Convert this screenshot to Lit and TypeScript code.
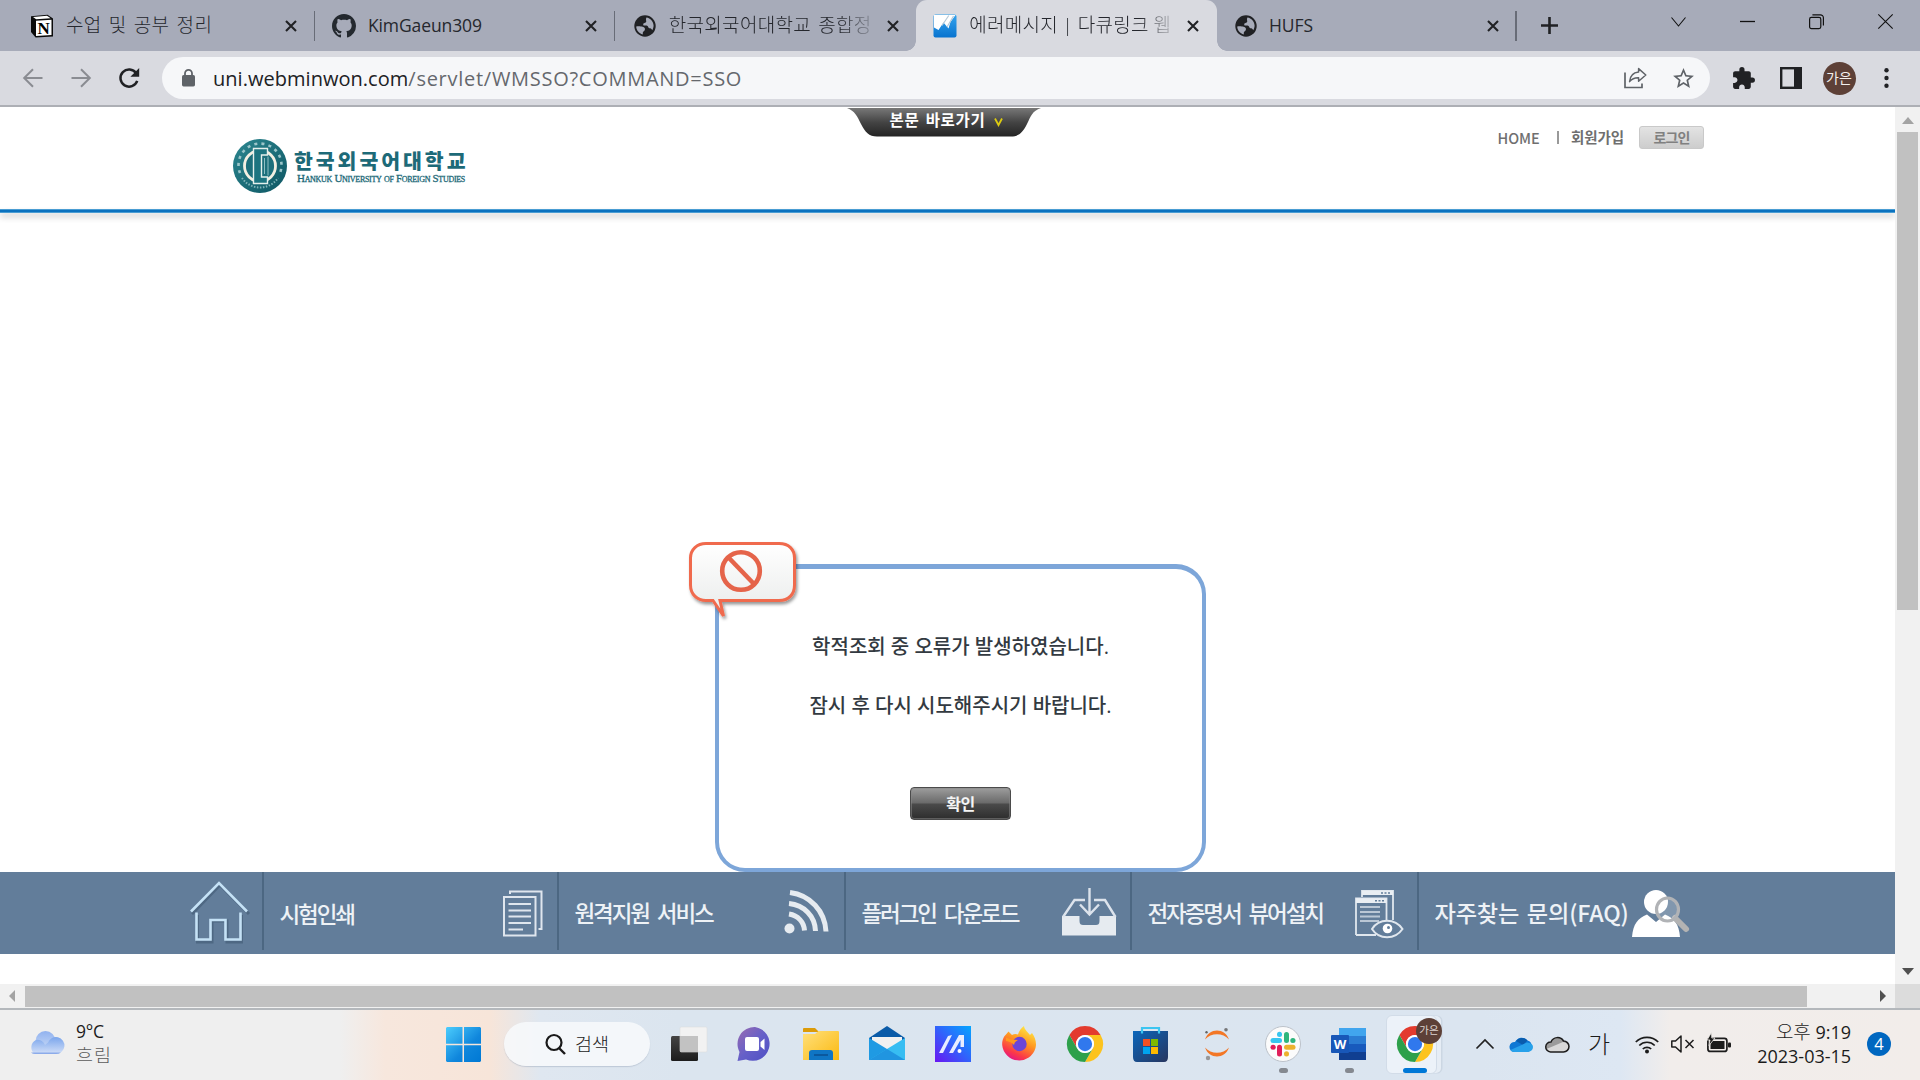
import { LitElement, html, css, svg, TemplateResult } from "lit";
import { customElement } from "lit/decorators.js";

const icon = (w: number, h: number, body: TemplateResult) =>
  html`<svg width=${w} height=${h} viewBox="0 0 ${w} ${h}" fill="none">${body}</svg>`;

const reset = css`
  * { box-sizing: border-box; }
  svg { display: block; flex: none; overflow: visible; }
  :host {
    font-family: "Open Sans", "Noto Sans CJK KR", sans-serif;
    white-space: nowrap;
  }
`;

/* ---------- browser icons ---------- */
const closeIcon = icon(12, 12, svg`<path d="M1 1L11 11M11 1L1 11" stroke="#202124" stroke-width="2.1"/>`);
const notion = icon(24, 24, svg`
  <path d="M1 2.2L17.5 .8L23 4.6V22.4L5.6 23.6L1 18Z" fill="#0b0b0b"/>
  <path d="M3 3L17 1.8L20.6 4.2L6.2 5.2Z" fill="#fff"/>
  <path d="M6 6.8L21.5 5.8V21L6 22Z" fill="#fff"/>
  <text x="13.7" y="20" text-anchor="middle" font-family="Liberation Serif" font-weight="700" font-size="17" fill="#000">N</text>`);
const github = html`<svg width="24" height="24" viewBox="0 0 16 16"><path fill="#24292f" d="M8 0C3.58 0 0 3.58 0 8c0 3.54 2.29 6.53 5.47 7.59.4.07.55-.17.55-.38 0-.19-.01-.82-.01-1.49-2.01.37-2.53-.49-2.69-.94-.09-.23-.48-.94-.82-1.13-.28-.15-.68-.52-.01-.53.63-.01 1.08.58 1.23.82.72 1.21 1.87.87 2.33.66.07-.52.28-.87.51-1.07-1.78-.2-3.64-.89-3.64-3.95 0-.87.31-1.59.82-2.15-.08-.2-.36-1.02.08-2.12 0 0 .67-.21 2.2.82.64-.18 1.32-.27 2-.27s1.36.09 2 .27c1.53-1.04 2.2-.82 2.2-.82.44 1.1.16 1.92.08 2.12.51.56.82 1.27.82 2.15 0 3.07-1.87 3.75-3.65 3.95.29.25.54.73.54 1.48 0 1.07-.01 1.93-.01 2.2 0 .21.15.46.55.38A8.01 8.01 0 0 0 16 8c0-4.42-3.58-8-8-8z"/></svg>`;
const globe = icon(24, 24, svg`
  <circle cx="12" cy="12" r="10.7" fill="#202124"/>
  <path d="M3.2 12.6C5 12 8 12.3 9.6 12.8C11.6 13.5 12.4 14.6 11.8 16C11 17.6 9.8 17.4 9.8 19V20.4C6 19.6 3.4 16.4 3.2 12.6Z" fill="#a7abb9"/>
  <path d="M13.4 3.4C17.4 4 20.5 7.4 20.6 11.6C20.6 13.4 20 15 19.2 16.2C18.6 14.4 17.4 14.2 16.2 14.2C15.2 14.2 15.4 11.8 13.6 11.6C12.2 11.4 10.2 12 10.2 10.4C10.2 8.8 12.8 9.4 13.2 7.8C13.5 6.6 12.4 5.6 13.4 3.4Z" fill="#a7abb9"/>`);
const chart = icon(24, 24, svg`
  <defs><linearGradient id="cg" x1="0" y1="0" x2="0" y2="1"><stop offset="0" stop-color="#35a4ee"/><stop offset="1" stop-color="#0873cf"/></linearGradient></defs>
  <rect x=".5" y=".5" width="23" height="23" rx="2" fill="url(#cg)"/>
  <path d="M1 1H22.5L17.5 8L15.5 14.5L10.5 8.5L5.5 16L1 13.5Z" fill="#fff"/>
  <path d="M15.8 1.5L9 11.5M20.5 2L14 13" stroke="#b6c9d8" stroke-width="1.2"/>`);

interface Tab { cls: string; icon: TemplateResult; title: string; }
const tabs: Tab[] = [
  { cls: "first", icon: notion, title: "수업 및 공부 정리" },
  { cls: "latin", icon: github, title: "KimGaeun309" },
  { cls: "nosep fade", icon: globe, title: "한국외국어대학교 종합정" },
  { cls: "active fade", icon: chart, title: "에러메시지 | 다큐링크 웹" },
  { cls: "latin", icon: globe, title: "HUFS" },
];

@customElement("browser-chrome")
export class BrowserChrome extends LitElement {
  static styles = [reset, css`
    :host { display: block; height: 107px; background: #d9dae0; border-bottom: 2px solid #adafb5; }
    .strip { display: flex; height: 51px; background: #a7abb9; padding-left: 15px; }
    .tab { position: relative; display: flex; align-items: center; width: 300.4px; height: 51px; padding-left: 17px; flex: none; }
    .tab::after { content: ""; width: 1.5px; height: 30px; margin-left: 16.5px; background: #686c77; flex: none; }
    .tab.nosep::after, .tab.active::after { visibility: hidden; }
    .title { width: 204.5px; flex: none; margin: 0 19px 0 12px; font-size: 19px; line-height: 50px; height: 51px; color: #25272d; letter-spacing: .35px; word-spacing: 2px; font-weight: 300; }
    .first { padding-left: 14.5px; }
    .first .title { width: 200px; letter-spacing: .300px; margin-left: 12.500px; }
    .latin .title { font-size: 17.5px; letter-spacing: -.1px; line-height: 51px; font-weight: 400; margin-left: 11.500px; width: 198.500px; }
    .nosep .title { margin-right: 11.500px; width: 206.500px; letter-spacing: .300px; }
    .active .title { margin-right: 13px; }
    .fade .title { -webkit-mask-image: linear-gradient(90deg, #000 83%, transparent 103%); mask-image: linear-gradient(90deg, #000 83%, transparent 103%); }
    .active { background: #d9dae0; border-radius: 11px 11px 0 0; }
    .active .title { word-spacing: -.7px; letter-spacing: .3px; }
    .active::before { content: ""; position: absolute; left: -10px; right: -10px; bottom: 0; height: 10px;
      background: radial-gradient(circle at 0 0, transparent 9.5px, #d9dae0 10px) left / 10px 10px no-repeat,
        radial-gradient(circle at 100% 0, transparent 9.5px, #d9dae0 10px) right / 10px 10px no-repeat; }
    .plus { margin: 17px 0 0 24.5px; }
    .win { display: flex; gap: 54px; margin: 14px 0 0 113px; }
    .bar { display: flex; align-items: center; height: 54px; padding-left: 23px; }
    .fwd { margin-left: 28px; }
    .reload { margin-left: 27px; }
    .omni { display: flex; align-items: center; width: 1548px; height: 42px; border-radius: 21px; background: #f6f7f9; margin-left: 22px; padding-left: 20px; }
    .url { width: 1411px; margin-left: 18px; font-size: 20px; line-height: 41px; letter-spacing: .73px; color: #65686d; }
    .host { color: #202124; letter-spacing: .03px; }
    .share { margin-right: 23.5px; }
    .ext { margin-left: 20.500px; }
    .side { margin-left: 24px; }
    .me { width: 33px; height: 33px; border-radius: 50%; background: #5d4037; color: #f4efed; font-size: 14px; line-height: 32px; text-align: center; margin-left: 21px; }
    .dots { margin-left: 28.5px; }
  `];
  render() {
    return html`
      <div class="strip">
        ${tabs.map(t => html`<div class="tab ${t.cls}">${t.icon}<div class="title">${t.title}</div>${closeIcon}</div>`)}
        <div class="plus">${icon(17, 17, svg`<path d="M8.5 0V17M0 8.5H17" stroke="#202124" stroke-width="2.6"/>`)}</div>
        <div class="win">
          ${icon(15, 15, svg`<path d="M.5 3.5L7.5 12L14.5 3.5" stroke="#111" stroke-width="1.1"/>`)}
          ${icon(15, 15, svg`<path d="M0 7.5H15" stroke="#111" stroke-width="1.3"/>`)}
          ${icon(15, 15, svg`<rect x=".6" y="3.4" width="11.2" height="11.2" rx="1.8" stroke="#111" stroke-width="1.2"/><path d="M3.4 .8H11.4A3 3 0 0 1 14.4 3.8V11.6" stroke="#111" stroke-width="1.2"/>`)}
          ${icon(15, 15, svg`<path d="M.3 .3L14.7 14.7M14.7 .3L.3 14.7" stroke="#111" stroke-width="1.1"/>`)}
        </div>
      </div>
      <div class="bar">
        ${icon(20, 20, svg`<path d="M19.5 10H1.5M10 1.2L1.2 10L10 18.8" stroke="#8a8c92" stroke-width="2"/>`)}
        <div class="fwd">${icon(20, 20, svg`<path d="M.5 10H18.5M10 1.2L18.8 10L10 18.8" stroke="#8a8c92" stroke-width="2"/>`)}</div>
        <div class="reload">${icon(22, 20, svg`<path d="M18.2 5.2A8.6 8.6 0 1 0 19.2 12.8" stroke="#202124" stroke-width="2.5"/><path d="M21.2 0V8.8H12.4Z" fill="#202124"/>`)}</div>
        <div class="omni">
          ${icon(13, 18, svg`<rect y="6" width="13" height="11.4" rx="1.6" fill="#5f6368"/><path d="M3 7V4.3A3.5 3.5 0 0 1 10 4.3V7" stroke="#5f6368" stroke-width="1.8"/>`)}
          <div class="url"><span class="host">uni.webminwon.com</span>/servlet/WMSSO?COMMAND=SSO</div>
          <div class="share">${icon(23, 22, svg`<path d="M1 5.5V20.5H18V16.5" stroke="#5f6368" stroke-width="1.7"/><path d="M14.6 1.6L21.8 8L14.6 14.2V10.8C10.5 10.6 7.8 12 5.6 14.6C6 9.4 9 5.6 14.6 5Z" stroke="#5f6368" stroke-width="1.5" stroke-linejoin="round"/>`)}</div>
          <svg width="25" height="25" viewBox="0 0 24 24"><path fill="#5f6368" d="M22 9.24l-7.19-.62L12 2 9.19 8.63 2 9.24l5.46 4.73L5.82 21 12 17.27 18.18 21l-1.63-7.03L22 9.24zM12 15.4l-3.76 2.27 1-4.28-3.32-2.88 4.38-.38L12 6.1l1.71 4.04 4.38.38-3.32 2.88 1 4.28L12 15.4z"/></svg>
        </div>
        <div class="ext"><svg width="25" height="25" viewBox="0 0 24 24"><path fill="#202124" d="M20.5 11H19V7c0-1.1-.9-2-2-2h-4V3.500a2.500 2.500 0 0 0-5 0V5H4c-1.100 0-1.990.9-1.990 2v3.800H3.500c1.490 0 2.700 1.210 2.700 2.700s-1.210 2.700-2.700 2.700H2V20c0 1.100.9 2 2 2h3.800v-1.500c0-1.490 1.210-2.700 2.700-2.700s2.700 1.210 2.700 2.700V22H17c1.100 0 2-.9 2-2v-4h1.500a2.500 2.500 0 0 0 0-5z"/></svg></div>
        <div class="side">${icon(22, 22, svg`<rect x="1.2" y="1.2" width="19.6" height="19.6" stroke="#202124" stroke-width="2.4"/><rect x="14" y="1" width="7" height="20" fill="#202124"/>`)}</div>
        <div class="me">가은</div>
        <div class="dots">${icon(5, 20, svg`<circle cx="2.5" cy="2.300" r="2.2" fill="#202124"/><circle cx="2.5" cy="10" r="2.200" fill="#202124"/><circle cx="2.5" cy="17.7" r="2.2" fill="#202124"/>`)}</div>
      </div>`;
  }
}

/* ---------- web page ---------- */
const seal = icon(54, 54, svg`
  <defs><linearGradient id="sg" x1="0" y1="0" x2="1" y2="1"><stop offset="0" stop-color="#2c8790"/><stop offset="1" stop-color="#0e5663"/></linearGradient></defs>
  <circle cx="27" cy="27" r="27" fill="url(#sg)"/>
  <path d="M7 34A21.500 21.500 0 1 1 47 34" stroke="#9cc6ca" stroke-width="2.600" stroke-dasharray="3 4.200"/>
  <path d="M9 39A21.800 21.800 0 0 0 45 39" stroke="#7fb3b8" stroke-width="2" stroke-dasharray="1.500 1.500"/>
  <circle cx="27" cy="27" r="15.500" fill="#1c6f7b" stroke="#f3efe2" stroke-width="2.800"/>
  <path d="M20.500 9.500H34.500V16H28.500V38H34.500V44.500H20.500Z" fill="#1c7480" stroke="#e4efec" stroke-width="1.4"/>
  <path d="M35 17.500V36.500M31.500 19V35" stroke="#8fbfc3" stroke-width="1"/>`);

const house = icon(58, 60, svg`
  <g stroke-linejoin="miter"><path d="M2 32L30 3L59 32M7.500 33V60H22V39H37V60H51.500V33" stroke="#415a75" stroke-width="3" opacity=".6"/>
  <path d="M1 29.500L29 1L57 29.500M6.500 30.500V57.500H20.500V38H35.500V57.500H50.500V30.500" stroke="#c5e2f6" stroke-width="2.6"/></g>`);
const docs = icon(40, 47, svg`
  <g stroke="#dfe6ee" stroke-width="2"><path d="M7 4V1.500H38.500V39H35.500"/><rect x="1" y="7" width="31.500" height="38.500"/>
  <path d="M5.500 14H28M5.500 20.500H28M5.500 26.500H28M5.500 33H28M5.500 39.500H20"/></g>`);
const rss = icon(45, 44, svg`
  <circle cx="5.500" cy="38.500" r="5" fill="#e6ebf0"/>
  <g stroke="#e6ebf0" stroke-width="5"><path d="M5 24C14 25.500 20 32 20.500 40.500"/><path d="M5 13.500C20 15 31 26 31.500 41"/><path d="M6 2.500C26 5 41 21 42 41.500"/></g>`);
const trayIcon = icon(54, 48, svg`
  <path d="M0 28H17.500V33C17.500 36 19 37 21 37H34C36 37 37.500 36 37.500 33V28H54V47.500H0Z" fill="#e6ebf0"/>
  <path d="M1 29L12.500 12H23M32 12H43L53.500 29M27.500 0V26M18 16.500L27.500 26.500L37 16.500" stroke="#dce3ec" stroke-width="2.4"/>`);
const viewer = icon(49, 49, svg`
  <g stroke="#e0e7ee" stroke-width="1.8"><path d="M7 7V1H38V30M1 45V8.500H31.500V33M1 45H21"/><path d="M5 17H25M5 22H25M5 26.500H25M5 31H24" opacity=".7"/>
  <path d="M17 39C24 28 40 28 47.500 39C40 50 24 50 17 39Z" fill="#627d9a" stroke-width="2"/></g>
  <path d="M7 1H38V5H7ZM1 8.500H31.500V13H1Z" fill="#e9eef3"/>
  <path d="M26 3H35M20 10.700H29" stroke="#627d9a" stroke-width="1.500" stroke-dasharray="2 1.500"/>
  <circle cx="32.500" cy="38.500" r="4.800" fill="#fff"/><circle cx="33.500" cy="37.500" r="1.500" fill="#627d9a"/>`);
const person = icon(58, 48, svg`
  <ellipse cx="24" cy="12" rx="12" ry="12" fill="#fff"/>
  <path d="M0 47C1 34 6 28 15 24.500L24 32L33 24.500C42 28 47 34 48 47Z" fill="#fff"/>
  <path d="M43 28L54 39" stroke="#b3b3b3" stroke-width="6" stroke-linecap="round"/>
  <ellipse cx="35.500" cy="19.500" rx="11" ry="11.500" stroke="#b1b3b6" stroke-width="3.200" fill="#ffffff33"/>`);

@customElement("web-page")
export class WebPage extends LitElement {
  static styles = [reset, css`
    :host { display: grid; grid-template-columns: 1895px 25px; grid-template-rows: 877px 24px; height: 901px; background: #fff; }
    .page { display: flex; flex-direction: column; height: 877px; overflow: hidden; }
    .head { display: flex; height: 102px; align-items: flex-start; padding-left: 233px; flex: none; }
    .seal { margin-top: 32px; }
    .uni { width: 182px; margin: 41px 0 0 7px; color: #1d6a78; }
    .ko { font: 900 20.500px/24px "Noto Sans CJK KR", sans-serif; letter-spacing: 2.950px; }
    .en { font: 400 11px/12px "Liberation Serif", serif; font-variant: small-caps; letter-spacing: -.310px; padding-left: 3px; -webkit-text-stroke: .3px #1d6a78; }
    .skip { position: relative; width: 194px; height: 29px; margin: 1px 0 0 371px; }
    .skiptext { position: absolute; left: 42.500px; top: -1px; font: 700 15.500px/25px "Noto Sans CJK KR", sans-serif; letter-spacing: .7px; word-spacing: 2px; color: #fff; }
    .util { display: flex; align-items: center; height: 23px; margin: 19px 0 0 456.500px; font: 500 14.500px/23px "Noto Sans CJK KR", sans-serif; color: #6f6f6f; letter-spacing: -.1px; }
    .home { width: 59.500px; }
    .vbar { width: 2px; height: 13px; background: #999; margin-right: 12px; }
    .join { width: 68px; font-weight: 600; letter-spacing: -.1px; line-height: 21px; margin-top: -2px; }
    .login { width: 65px; height: 23px; border: 1px solid #c9c9c9; border-radius: 3px; background: linear-gradient(#e3e3e3, #cdcdcd); text-align: center; font-weight: 700; font-size: 14px; line-height: 21px; color: #808080; letter-spacing: -.8px; }
    .rule { height: 4px; background: #0b72bf; border-top: 1px solid #4a9dd3; border-bottom: 1px solid #4a9dd3; flex: none; box-shadow: 0 4px 6px #0003; }
    .main { flex: 1; display: flex; align-items: flex-end; padding-left: 715px; }
    .box { position: relative; width: 491px; height: 308px; border: 4px solid #7da6d9; border-top-width: 5px; border-radius: 30px; display: flex; flex-direction: column; align-items: center; padding-top: 63px; }
    .bubble { position: absolute; left: -30px; top: -27px; }
    .msg { font: 500 20px/30px "Open Sans", "Noto Sans CJK KR", sans-serif; color: #333a41; margin-bottom: 29px; }
    .ok { width: 101px; height: 33px; margin-top: 37px; border: 1px solid #4b4b4b; border-radius: 4px; background: linear-gradient(#9d9d9d, #6a6a6a 48%, #4a4a4a 52%, #2d2d2d); box-shadow: inset 0 0 0 1px #8888; color: #f5f5f5; font: 700 16px/31px "Noto Sans CJK KR", sans-serif; letter-spacing: -.5px; text-align: center; }
    .nav { height: 82px; background: #627d9a; display: flex; align-items: flex-start; padding-left: 190px; flex: none; }
    .cell { display: flex; justify-content: space-between; height: 78px; border-left: 2px solid #4c6782; padding-left: 16px; color: #eef2f6; font: 500 22.500px/81px "Noto Sans CJK KR", sans-serif; letter-spacing: -2.100px; word-spacing: 5px; }
    .house { width: 71.500px; padding-top: 10px; }
    .c1 { width: 295px; padding-right: 14px; line-height: 83px; } .c2 { width: 287px; padding-right: 15px; } .c3 { width: 286px; padding-right: 14px; }
    .c4 { width: 287px; padding-right: 13px; } .c5 { width: 273px; padding-right: 0; font-size: 23.200px; letter-spacing: -.150px; word-spacing: 2.500px; }
    .cell svg { margin-top: 18px; } .c3 svg { margin-top: 16px; }
    .bottom { height: 30px; flex: none; }
    .vs { background: #f1f1f1; display: flex; flex-direction: column; align-items: center; height: 877px; }
    .vs .thumb { width: 21px; height: 478px; background: #c1c1c1; margin: 8px 0 358px; }
    .vs svg:first-child { margin-top: 10px; }
    .hs { background: #f1f1f1; display: flex; align-items: center; padding-left: 9px; }
    .hs .thumb { width: 1782px; height: 21px; background: #c1c1c1; margin: 0 73px 0 10px; }
    .corner { background: #dcdcdc; }
  `];
  render() {
    return html`
      <div class="page">
        <div class="head">
          <div class="seal">${seal}</div>
          <div class="uni"><div class="ko">한국외국어대학교</div><div class="en">Hankuk University of Foreign Studies</div></div>
          <div class="skip">
            ${icon(194, 29, svg`<defs><linearGradient id="kg" x1="0" y1="0" x2="0" y2="1"><stop offset="0" stop-color="#787878"/><stop offset=".5" stop-color="#444"/><stop offset="1" stop-color="#242424"/></linearGradient></defs>
              <path d="M0 0H194C185 3 184 8 180 16C176 24 172 28.500 164 28.500H30C22 28.500 18 24 14 16C10 8 8 3 0 0Z" fill="url(#kg)"/><path d="M148 10.500L151.500 17L155 10.500" stroke="#dccb10" stroke-width="1.800"/>`)}
            <div class="skiptext">본문 바로가기</div>
          </div>
          <div class="util"><div class="home">HOME</div><div class="vbar"></div><div class="join">회원가입</div><div class="login">로그인</div></div>
        </div>
        <div class="rule"></div>
        <div class="main">
          <div class="box">
            <div class="bubble">${icon(108, 78, svg`
              <defs><linearGradient id="bg" x1="0" y1="0" x2="0" y2="1"><stop offset="0" stop-color="#fff"/><stop offset="1" stop-color="#e9ebea"/></linearGradient>
              <filter id="sh" x="-10%" y="-10%" width="130%" height="130%"><feDropShadow dx="1.500" dy="2.500" stdDeviation="1.600" flood-opacity=".4"/></filter></defs>
              <path d="M17 1.500H90C100 1.500 105.500 7.500 105.500 16V43C105.500 52 100 58.500 90 58.500H31L34.500 74L24 58.500H17C8 58.500 1.500 52 1.500 43V16C1.500 7.500 8 1.500 17 1.500Z" fill="url(#bg)" stroke="#f06a4e" stroke-width="3" filter="url(#sh)"/>
              <circle cx="52" cy="29" r="18.800" stroke="#e5644a" stroke-width="4.600"/><path d="M40 16L65 42" stroke="#e5644a" stroke-width="4.600"/>`)}</div>
            <div class="msg">학적조회 중 오류가 발생하였습니다.</div>
            <div class="msg">잠시 후 다시 시도해주시기 바랍니다.</div>
            <div class="ok">확인</div>
          </div>
        </div>
        <div class="nav">
          <div class="house">${house}</div>
          <div class="cell c1">시험인쇄${docs}</div>
          <div class="cell c2">원격지원 서비스${rss}</div>
          <div class="cell c3">플러그인 다운로드${trayIcon}</div>
          <div class="cell c4">전자증명서 뷰어설치${viewer}</div>
          <div class="cell c5">자주찾는 문의(FAQ)${person}</div>
        </div>
        <div class="bottom"></div>
      </div>
      <div class="vs">${icon(12, 7, svg`<path d="M6 0L12 7H0Z" fill="#a3a3a3"/>`)}<div class="thumb"></div>${icon(12, 7, svg`<path d="M6 7L12 0H0Z" fill="#505050"/>`)}</div>
      <div class="hs">${icon(6, 12, svg`<path d="M0 6L6 0V12Z" fill="#a3a3a3"/>`)}<div class="thumb"></div>${icon(6, 12, svg`<path d="M6 6L0 0V12Z" fill="#505050"/>`)}</div>
      <div class="corner"></div>`;
  }
}

/* ---------- taskbar ---------- */
const chrome = html`<svg width="36" height="36" viewBox="0 0 48 48">
  <path d="M24 12H44.800A24 24 0 0 0 3.200 12L13.600 30A12 12 0 0 1 24 12Z" fill="#e33b2e"/>
  <path d="M24 48A24 24 0 0 0 44.800 12H24A12 12 0 0 1 34.400 30Z" fill="#fcc31e"/>
  <path d="M13.600 30L3.200 12A24 24 0 0 0 24 48L34.400 30A12 12 0 0 1 13.600 30Z" fill="#2da04b"/>
  <circle cx="24" cy="24" r="12" fill="#fff"/><circle cx="24" cy="24" r="9.500" fill="#3078ed"/></svg>`;
const apps: TemplateResult[] = [
  icon(36, 36, svg`<defs><linearGradient id="t1" x1="0" y1="0" x2="0" y2="1"><stop offset="0" stop-color="#444"/><stop offset="1" stop-color="#1c1c1c"/></linearGradient></defs>
    <rect y="10" width="27" height="25" rx="1.500" fill="url(#t1)"/><rect x="9" y="1" width="27" height="25" rx="1.500" fill="#f2f2f2" stroke="#ddd" stroke-width=".6"/><path d="M9 10H27V26H10.500Q9 26 9 24.500Z" fill="#c2c2c2"/>`),
  icon(36, 36, svg`<defs><linearGradient id="t2" x1="0" y1="0" x2="1" y2="1"><stop offset="0" stop-color="#9a6bb0"/><stop offset=".5" stop-color="#6660c8"/><stop offset="1" stop-color="#4e4fc4"/></linearGradient></defs>
    <path d="M18 1A17 17 0 1 1 9 33.500L0.500 35L2.500 26A17 17 0 0 1 18 1Z" fill="url(#t2)"/><rect x="8" y="11" width="14" height="14" rx="2" fill="#fff"/><path d="M23.500 16L27.500 12.500V24L23.500 20.500Z" fill="#fff"/>`),
  icon(36, 36, svg`<defs><linearGradient id="t3" x1="0" y1="0" x2="1" y2="1"><stop offset="0" stop-color="#ffe07c"/><stop offset="1" stop-color="#fbb910"/></linearGradient></defs>
    <path d="M0 3Q0 2 1 2H12L16 6H0Z" fill="#dc9b08"/><path d="M0 8H12L15.500 5H35Q36 5 36 6V34H0Z" fill="url(#t3)"/><path d="M6 34V27Q6 24 9 24H27Q30 24 30 27V34Z" fill="#0f75c4"/><path d="M11 29H25" stroke="#0b4f91" stroke-width="1.500"/>`),
  icon(36, 36, svg`<path d="M0 12L18 0L36 12V20H0Z" fill="#0b5ba8"/><path d="M3 11H33V18L18 26L3 18Z" fill="#f1f1f1"/><path d="M0 12L36 34H0Z" fill="#1f9ae3"/><path d="M0 34L36 12V34Z" fill="#37bdf2"/><path d="M0 34L18 23L36 34Z" fill="#2095e0"/>`),
  icon(36, 36, svg`<defs><linearGradient id="t4" x1="0" y1="1" x2="1" y2="0"><stop offset="0" stop-color="#6a16f2"/><stop offset=".5" stop-color="#3162fb"/><stop offset="1" stop-color="#04a6ff"/></linearGradient></defs>
    <rect width="36" height="36" fill="url(#t4)"/><path d="M4 27L13 10L17 9L8 27ZM14 27L24 9H29V21H25.500V14L18 27Z" fill="#e8edff"/><circle cx="24.500" cy="25" r="2" fill="#fff"/>`),
  icon(36, 36, svg`<defs><linearGradient id="t5" x1=".8" y1="0" x2=".3" y2="1"><stop offset="0" stop-color="#fff14a"/><stop offset=".45" stop-color="#ff9620"/><stop offset=".8" stop-color="#fb3948"/><stop offset="1" stop-color="#e31587"/></linearGradient></defs>
    <path d="M7.500 5.500L11 9Q14 7.500 17 8.500C18 5 20 2 23 0C23.500 4 27 6 29 9L31 7C34 11 36 17 34.500 22A17 17 0 0 1 1.200 19C1 14 3 10 5 8.500Z" fill="url(#t5)"/><circle cx="18.500" cy="18" r="7.200" fill="#6b45d8"/><path d="M5 11.500L10 13.500L17 14C14 15.500 13.500 17 13 19C11.500 16.500 8 15.500 5 15Z" fill="#ff9a1e"/>`),
  chrome,
  icon(36, 36, svg`<defs><linearGradient id="t6" x1="0" y1="0" x2="1" y2="1"><stop offset="0" stop-color="#0a66bb"/><stop offset="1" stop-color="#28365f"/></linearGradient></defs>
    <path d="M0 5H35V31Q35 36 31 36H4Q0 36 0 31Z" fill="url(#t6)"/><path d="M9 7.500V2H26V7.500" stroke="#3cc5f1" stroke-width="2.200"/>
    <rect x="10" y="13" width="7" height="7" fill="#f25022"/><rect x="18" y="13" width="7" height="7" fill="#7fba00"/><rect x="10" y="21" width="7" height="7" fill="#00a4ef"/><rect x="18" y="21" width="7" height="7" fill="#ffb900"/>`),
  icon(36, 36, svg`<path d="M6 13.500C10 1.500 26 1.500 30 13.500C24 6.500 12 6.500 6 13.500ZM6 21.500C12 28.500 24 28.500 30 21.500C26 33.500 10 33.500 6 21.500Z" fill="#f37726"/><circle cx="27" cy="3.800" r="1.800" fill="#767677"/><circle cx="7.500" cy="6.300" r="1.200" fill="#616262"/><circle cx="9" cy="32" r="2.200" fill="#989798"/>`),
  icon(36, 36, svg`<circle cx="18" cy="18" r="17.500" fill="#fbfbfb" stroke="#bcc2ca"/>
    <g stroke-width="5" stroke-linecap="round"><path d="M21.500 8.500V14.500" stroke="#2eb67d"/><path d="M27.800 14.500H28" stroke="#2eb67d"/><path d="M8 14.500H14.500" stroke="#36c5f0"/><path d="M14.500 8.200V8.400" stroke="#36c5f0"/><path d="M14.500 21.300V28" stroke="#e01e5a"/><path d="M8 21.300H8.200" stroke="#e01e5a"/><path d="M21.500 21.300H28" stroke="#ecb22e"/><path d="M21.500 27.800V28" stroke="#ecb22e"/></g>`),
  icon(36, 36, svg`<path d="M8 2H35V10H8Z" fill="#41a5ee"/><path d="M8 10H35V18H8Z" fill="#2b7cd3"/><path d="M8 18H35V26H8Z" fill="#185abd"/><path d="M8 26H35V34H8Z" fill="#103f91"/><rect y="9" width="18" height="18" rx="1" fill="#1857b8"/><text x="9" y="23" text-anchor="middle" font-family="Open Sans" font-weight="700" font-size="13" fill="#fff">W</text>`),
];

@customElement("win-taskbar")
export class WinTaskbar extends LitElement {
  static styles = [reset, css`
    :host { display: flex; height: 72px; border-top: 2px solid #b4b8bc; padding-left: 27.500px; color: #1b1b1b;
      background: linear-gradient(90deg, #efefef 340px, #f7e7dd 385px, #f7e5d9 490px, #dfe7f0 540px, #dbe5ef 680px, #dbe5f0 1480px, #dde7f3 1620px, #f1edeb 1670px, #f2edea); }
    .weather { display: flex; width: 418.500px; }
    .cloud { margin: 21px 12.500px 0 0; }
    .wt { font-size: 17.500px; line-height: 25px; padding-top: 9px; letter-spacing: -.3px; }
    .sub { color: #5b5b5b; font-size: 18.500px; font-weight: 300; line-height: 22px; letter-spacing: 1px; }
    .start { margin-top: 17px; width: 58px; }
    .search { display: flex; align-items: center; width: 146px; height: 44px; border-radius: 22px; margin-top: 12px; background: #f7f9fcdd; box-shadow: 0 1px 1px #9aa8bb77; padding-left: 41px; font-size: 18.500px; line-height: 42px; font-weight: 300; gap: 9px; }
    .apps { display: flex; margin-left: 6px; }
    .app { width: 66px; height: 70px; padding: 16px 0 0 15px; display: flex; flex-direction: column; }
    .run::after { content: ""; width: 9px; height: 5px; border-radius: 3px; background: #858990; margin: 6px 0 0 13.500px; }
    .tile { position: relative; width: 51px; height: 59px; margin: 5px 0 0 4px; border-radius: 6px; background: #ecf2f9; border: 1px solid #d2dce8; padding: 10px 0 0 10px; box-shadow: 5px 0 0 -1px #e6edf5, 6px 0 0 -.5px #ccd7e3; }
    .tile::after { content: ""; display: block; width: 24px; height: 5px; border-radius: 3px; background: #0078d7; margin: 6px 0 0 6px; }
    .badge { position: absolute; left: 29px; top: 2px; width: 26px; height: 26px; border-radius: 50%; background: #5d4037; color: #dcd3cf; font-size: 10.500px; line-height: 25px; text-align: center; }
    .tray { display: flex; align-items: center; margin-left: 39px; height: 68px; }
    .ime { font-size: 24px; line-height: 60px; font-weight: 300; width: 47px; margin-left: 19px; }
    .clock { width: 100px; margin-left: 20px; text-align: right; font-size: 18px; line-height: 24.500px; letter-spacing: -.020px; font-weight: 400; }
    .ap { font-weight: 300; font-size: 19px; }
    .n { width: 24px; height: 24px; border-radius: 50%; background: #0067c0; color: #fff; font-size: 16.500px; line-height: 23px; text-align: center; margin-left: 16px; }
  `];
  render() {
    return html`
      <div class="weather">
        <div class="cloud">${icon(36, 23, svg`<defs><linearGradient id="w" x1="0" y1="0" x2="0" y2="1"><stop offset="0" stop-color="#7aa5ec"/><stop offset="1" stop-color="#d3e0f8"/></linearGradient><linearGradient id="w2" x1="0" y1="0" x2="0" y2="1"><stop offset="0" stop-color="#91b2ef"/><stop offset="1" stop-color="#cbdcf7"/></linearGradient></defs>
          <circle cx="17.500" cy="10" r="10" fill="url(#w2)"/><path d="M8 9A8 8 0 0 0 7 23H28A8.500 8.500 0 1 0 20 11.500L17 14A8 8 0 0 0 8 9Z" fill="url(#w)"/><path d="M3 21.500Q4.500 23 7 23H28Q31 23 33 21.500Z" fill="#8cabea"/>`)}</div>
        <div class="wt"><div>9°C</div><div class="sub">흐림</div></div>
      </div>
      <div class="start">${icon(35, 35, svg`<defs><linearGradient id="s" x1="0" y1="0" x2="35" y2="35" gradientUnits="userSpaceOnUse"><stop offset="0" stop-color="#4ccdfd"/><stop offset=".6" stop-color="#0f86dc"/><stop offset="1" stop-color="#0078d4"/></linearGradient></defs>
        <path d="M1 0H16.500V16.800H0V1ZM18 0H34L35 1V16.800H18ZM0 18.200H16.500V35H1L0 34ZM18 18.200H35V34L34 35H18Z" fill="url(#s)"/>`)}</div>
      <div class="search">${icon(21, 21, svg`<circle cx="9" cy="8.500" r="7.500" stroke="#1a1a1a" stroke-width="2.200"/><path d="M14 14L20 20" stroke="#1a1a1a" stroke-width="2.400"/>`)}검색</div>
      <div class="apps">
        ${apps.map((a, i) => html`<div class="app ${i > 8 ? "run" : ""}">${a}</div>`)}
        <div class="tile">${chrome}<div class="badge">가은</div></div>
      </div>
      <div class="tray">
        ${icon(18, 10, svg`<path d="M.5 9.500L9 1L17.500 9.500" stroke="#222" stroke-width="1.700"/>`)}
        ${icon(39, 16, svg`<g transform="translate(15 0)"><path d="M6 6A7.500 7.500 0 0 1 18.500 4.500A6 6 0 0 1 18.500 16H5A5 5 0 0 1 6 6Z" fill="#0f78d4"/><path d="M7 5A7.500 7.500 0 0 1 18.500 4.500L14 9Z" fill="#0a5cad"/><path d="M1.500 14L18 6.500Q24 7 24 11T19 16H5Q2.500 16 1.500 14Z" fill="#28a1ea"/></g>`)}
        ${icon(36, 16, svg`<g transform="translate(12 0)"><path d="M6 6A7 7 0 0 1 18.500 5A5.500 5.500 0 0 1 18.500 16H5.500A5 5 0 0 1 6 6Z" fill="#9b9b9b"/><path d="M1.500 13L18 6Q23.500 7 23.500 11T19 16H5Q2.500 15 1.500 13Z" fill="#d8d8d8"/><path d="M6 6A7 7 0 0 1 18.500 5A5.500 5.500 0 0 1 18.500 16H5.500A5 5 0 0 1 6 6Z" stroke="#1c1c1c" stroke-width="1.500"/></g>`)}
        <div class="ime">가</div>
        ${icon(24, 19, svg`<g stroke="#1c1c1c" stroke-width="1.700"><path d="M.8 7A15.800 15.800 0 0 1 23.200 7M4.300 10.500A10.800 10.800 0 0 1 19.700 10.500M7.800 14A6 6 0 0 1 16.200 14"/></g><circle cx="12" cy="16.500" r="2" fill="#1c1c1c"/>`)}
        ${icon(35, 18, svg`<g transform="translate(12 0)" stroke="#1c1c1c" stroke-width="1.500"><path d="M.8 6H4.500L10 1V17L4.500 12H.8Z" stroke-linejoin="round"/><path d="M14.500 5L22.500 13M22.500 5L14.500 13"/></g>`)}
        ${icon(37, 19, svg`<g transform="translate(13 -1.500)"><rect x=".9" y="4.900" width="19" height="13" rx="2.500" stroke="#1c1c1c" stroke-width="1.700"/><rect x="3.500" y="7.500" width="14" height="8" fill="#1c1c1c"/><rect x="21" y="9" width="3" height="5" rx="1" fill="#1c1c1c"/><path d="M4.500 -1L0 6.500H3L2 12L8 4.500H4.800Z" fill="#1c1c1c" stroke="#f1edea" stroke-width=".8"/></g>`)}
        <div class="clock"><div><span class="ap">오후</span> 9:19</div><div>2023-03-15</div></div>
        <div class="n">4</div>
      </div>`;
  }
}

@customElement("app-root")
export class AppRoot extends LitElement {
  static styles = css`
    :host { display: flex; flex-direction: column; width: 1920px; height: 1080px; overflow: hidden; }
  `;
  render() {
    return html`<browser-chrome></browser-chrome><web-page></web-page><win-taskbar></win-taskbar>`;
  }
}
